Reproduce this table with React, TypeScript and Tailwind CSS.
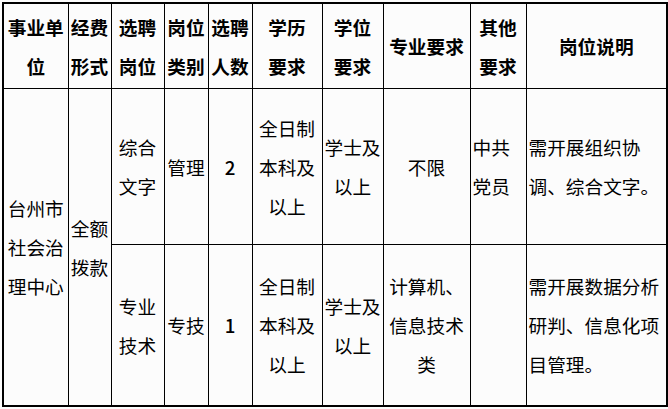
const cell =
  "border border-black align-middle text-center whitespace-nowrap px-[2px]";

const head = ["事业单<br>位", "经费<br>形式", "选聘<br>岗位", "岗位<br>类别", "选聘<br>人数", "学历<br>要求", "学位<br>要求", "专业要求", "其他<br>要求", "岗位说明"];

function Lines({ text }: { text: string }) {
  const parts = text.split("<br>");
  return (
    <>
      {parts.map((p, i) => (
        <span key={i}>
          {p}
          {i < parts.length - 1 && <br />}
        </span>
      ))}
    </>
  );
}

export default function App() {
  return (
    <div
      className="w-[668px] h-[409px] bg-[#fcfcfc] pt-[2px] pl-[2px] text-black text-[18.67px] leading-[39px]"
      style={{ fontFamily: '"Noto Sans CJK SC", "Noto Sans", sans-serif' }}
    >
      <table className="table-fixed border-collapse border-2 border-black w-[664px]">
        <colgroup>
          <col className="w-[65px]" />
          <col className="w-[43px]" />
          <col className="w-[53px]" />
          <col className="w-[44px]" />
          <col className="w-[44px]" />
          <col className="w-[70px]" />
          <col className="w-[61px]" />
          <col className="w-[87px]" />
          <col className="w-[56px]" />
          <col className="w-[141px]" />
        </colgroup>
        <tbody>
          <tr className="h-[85px]">
            {head.map((h) => (
              <th key={h} className={`${cell} font-bold`}>
                <Lines text={h} />
              </th>
            ))}
          </tr>
          <tr className="h-[156px]">
            <td rowSpan={2} className={cell}>
              台州市<br />社会治<br />理中心
            </td>
            <td rowSpan={2} className={cell}>
              全额<br />拨款
            </td>
            <td className={cell}>
              综合<br />文字
            </td>
            <td className={cell}>管理</td>
            <td className={`${cell} font-medium`}>2</td>
            <td className={cell}>
              全日制<br />本科及<br />以上
            </td>
            <td className={cell}>
              学士及<br />以上
            </td>
            <td className={cell}>不限</td>
            <td className={`${cell} text-left`}>
              中共<br />党员
            </td>
            <td className={`${cell} text-left`}>
              需开展组织协<br />调、综合文字。
            </td>
          </tr>
          <tr className="h-[162px]">
            <td className={cell}>
              专业<br />技术
            </td>
            <td className={cell}>专技</td>
            <td className={`${cell} font-medium`}>1</td>
            <td className={cell}>
              全日制<br />本科及<br />以上
            </td>
            <td className={cell}>
              学士及<br />以上
            </td>
            <td className={cell}>
              计算机、<br />信息技术<br />类
            </td>
            <td className={cell}></td>
            <td className={`${cell} text-left`}>
              需开展数据分析<br />研判、信息化项<br />目管理。
            </td>
          </tr>
        </tbody>
      </table>
    </div>
  );
}
